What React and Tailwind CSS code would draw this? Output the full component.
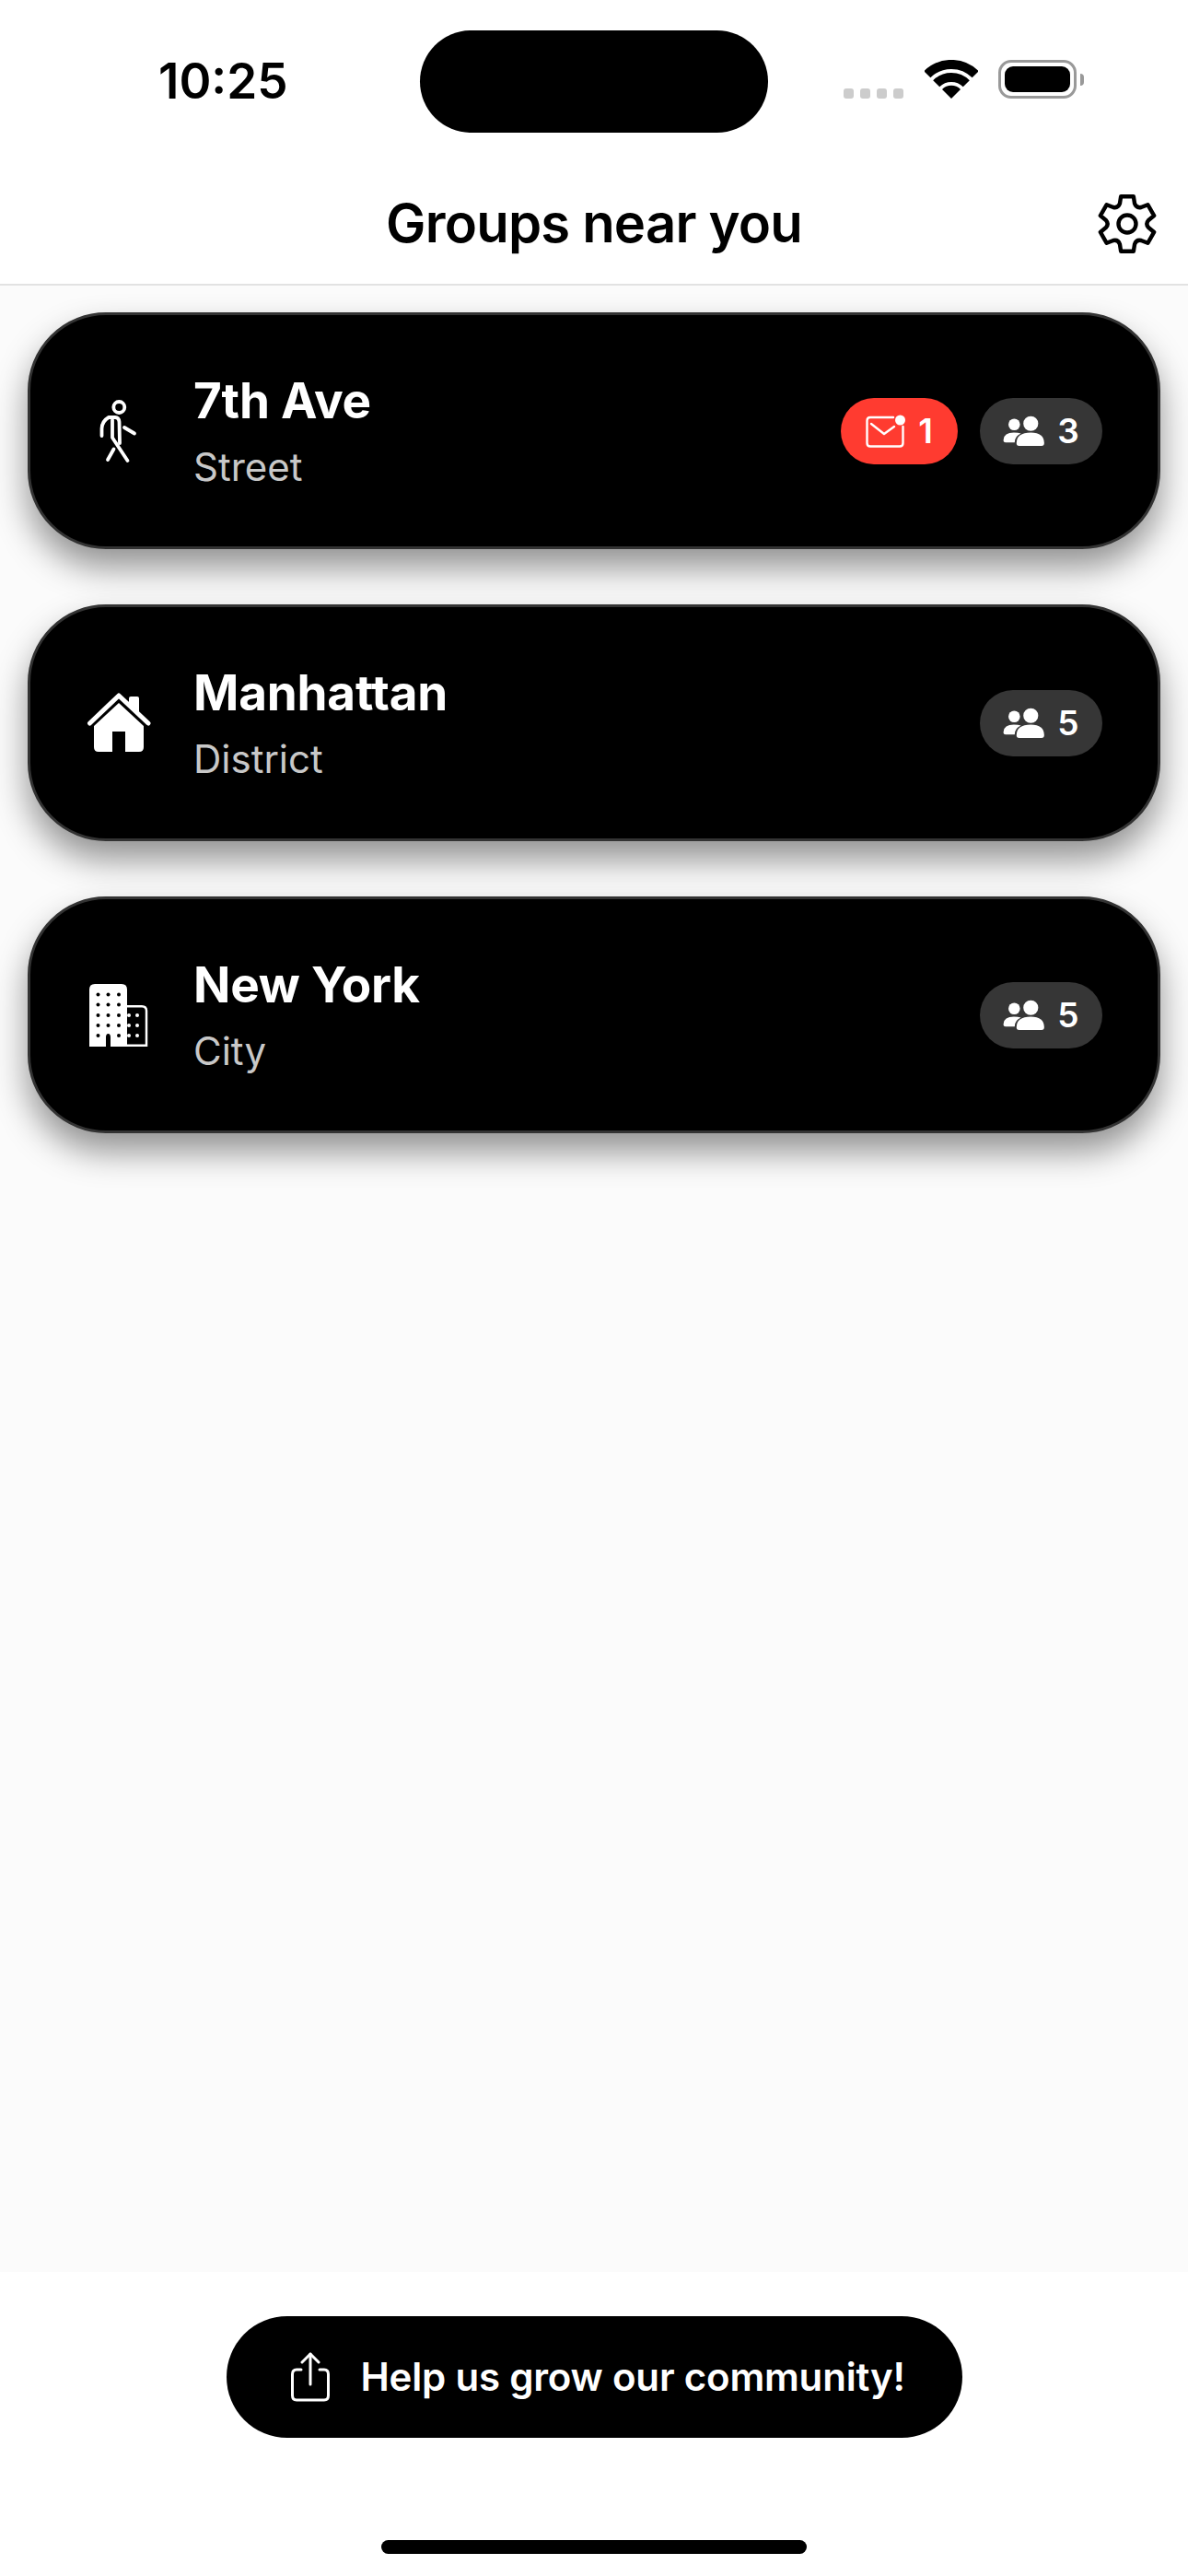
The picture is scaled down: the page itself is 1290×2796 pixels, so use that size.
import React from "react";

const groups = [
  { name: "7th Ave", type: "Street", icon: "walker", members: 3, unread: 1 },
  { name: "Manhattan", type: "District", icon: "house", members: 5 },
  { name: "New York", type: "City", icon: "building", members: 5 },
];

function polar(r, deg) {
  const rad = (deg * Math.PI) / 180;
  return `${(33 + r * Math.cos(rad)).toFixed(2)} ${(33 + r * Math.sin(rad)).toFixed(2)}`;
}

// six flat teeth, one pointing straight up
function gearPath() {
  let d = "";
  for (let k = 0; k < 6; k++) {
    const a = -90 + k * 60;
    d += `${k === 0 ? "M" : "L"}${polar(23.5, a - 20)}L${polar(30.5, a - 13)}L${polar(30.5, a + 13)}L${polar(23.5, a + 20)}Q${polar(19.5, a + 30)} ${polar(23.5, a + 40)}`;
  }
  return d + "Z";
}

function GearIcon() {
  return (
    <svg width="66" height="66" viewBox="0 0 66 66" fill="none" stroke="black" strokeWidth="4.4" strokeLinejoin="round">
      <path d={gearPath()} />
      <circle cx="33" cy="33" r="9.500" />
    </svg>
  );
}

function WalkerIcon() {
  return (
    <svg width="150" height="128" viewBox="0 -7 150 128" fill="none" stroke="white" strokeWidth="3.8" strokeLinecap="round" strokeLinejoin="round">
      <circle cx="69.3" cy="31" r="6" />
      <path d="M50.5 62V54Q51 46 58 42H65Q69 42 69.5 47L70 70" />
      <path d="M62 45V64L78.5 89" />
      <path d="M75 53L86 59.5" />
      <path d="M63.5 76.500L57 88" />
    </svg>
  );
}

function HouseIcon() {
  return (
    <svg width="150" height="128" viewBox="0 0 150 128" fill="white">
      <path d="M37.500 64L69 34L101 64" fill="none" stroke="white" strokeWidth="5" strokeLinecap="round" strokeLinejoin="round" />
      <path d="M80 42V37Q80 35 82 35H89Q91 35 91 37V52Z" />
      <path d="M42 67L69 42L96 67V90Q96 95 91 95H76V73H62V95H47Q42 95 42 90Z" />
    </svg>
  );
}

function BuildingIcon() {
  const towerDots = [38.5, 49.5, 61, 72, 83];
  return (
    <svg width="150" height="128" viewBox="0 -3 150 128">
      <path d="M37 33Q37 27 43 27H72Q78 27 78 33V95H60V85Q60 81 57.500 81Q55 81 55 85V95H37Z" fill="white" />
      <path d="M78 51.200H94Q99 51.200 99 56V93.800H78" fill="none" stroke="white" strokeWidth="2.500" />
      {towerDots.map((y) =>
        [46.5, 57.5, 69].map((x) =>
          y === 83 && x === 57.5 ? null : <circle key={`${x}-${y}`} cx={x} cy={y} r="2" fill="black" />
        )
      )}
      {[61, 72, 83].map((y) =>
        [80, 89].map((x) => <circle key={`${x}-${y}`} cx={x} cy={y} r="2" fill="white" />)
      )}
    </svg>
  );
}

function MailIcon() {
  return (
    <svg width="44" height="40" viewBox="0 0 44 40" fill="none" stroke="white" strokeWidth="2.400" strokeLinejoin="round" strokeLinecap="round">
      <path d="M30 5H5Q1.500 5 1.500 8.500V33Q1.500 36.500 5 36.500H37Q40.500 36.500 40.500 33V15" />
      <path d="M6 12L20 23L31 15" />
      <circle cx="37.500" cy="8" r="5.500" fill="white" stroke="none" />
    </svg>
  );
}

function PeopleIcon() {
  return (
    <svg width="46" height="34" viewBox="209 51 47 35" fill="white">
      <circle cx="240" cy="60" r="8.300" />
      <path d="M224 82Q224 70 240 70Q255 70 255 82Q255 85 252 85H227Q224 85 224 82Z" />
      <circle cx="221.500" cy="61" r="6.500" />
      <path d="M209.500 78Q210 70 221 70Q226 70 229 71Q222 74 222 81H212Q209 81 209.500 78Z" />
    </svg>
  );
}

function ShareIcon() {
  return (
    <svg width="42" height="54" viewBox="0 0 42 54" fill="none" stroke="white" strokeWidth="3" strokeLinecap="round" strokeLinejoin="round">
      <path d="M21 35V2" />
      <path d="M12 11L21 2L30 11" />
      <path d="M11 19H6Q1.500 19 1.500 24V47Q1.500 52 6 52H36Q40.500 52 40.500 47V24Q40.500 19 36 19H31" />
    </svg>
  );
}

function WifiIcon() {
  return (
    <svg width="58" height="42" viewBox="0 0 58 42" fill="none" stroke="black" strokeWidth="10">
      <path d="M2.800 15.800A37 37 0 0 1 55.200 15.800" />
      <path d="M12.700 25.700A23 23 0 0 1 45.300 25.700" />
      <path d="M29 42L19 32A14 14 0 0 1 39 32Z" fill="black" stroke="none" />
    </svg>
  );
}

function StatusBar() {
  return (
    <div className="h-[174px] flex items-start shrink-0">
      <div className="w-[456px] pl-[172px] pt-[57px] text-[53px] leading-[62px] font-semibold text-black">10:25</div>
      <div className="w-[378px] h-[111px] mt-[33px] bg-black rounded-full"></div>
      <div className="flex items-start pl-[82px] pt-[65px]">
        <div className="flex gap-[7px] pt-[31px]">
          <div className="w-[11px] h-[11px] rounded-[3px] bg-[#cccccc]"></div>
          <div className="w-[11px] h-[11px] rounded-[3px] bg-[#cccccc]"></div>
          <div className="w-[11px] h-[11px] rounded-[3px] bg-[#cccccc]"></div>
          <div className="w-[11px] h-[11px] rounded-[3px] bg-[#cccccc]"></div>
        </div>
        <div className="ml-[23px]"><WifiIcon /></div>
        <div className="ml-[22px] w-[85px] h-[42px] rounded-[14px] border-[3px] border-[#999999] p-[4px]">
          <div className="w-full h-full rounded-[9px] bg-black"></div>
        </div>
        <div className="ml-[4px] mt-[15px] w-[4px] h-[13px] rounded-r-full bg-[#999999]"></div>
      </div>
    </div>
  );
}

function Pill({ color, children }) {
  return (
    <div className={`h-[72px] rounded-full flex items-center justify-center text-white text-[37px] font-semibold ${color}`}>
      {children}
    </div>
  );
}

function GroupCard({ group }) {
  return (
    <div className="h-[257px] rounded-[85px] bg-black border-[3px] border-[#333333] shadow-[0_20px_36px_rgba(0,0,0,0.42)] flex items-center pr-[60px] text-white">
      <div className="w-[177px] shrink-0 pl-[27px]">
        {group.icon === "walker" && <WalkerIcon />}
        {group.icon === "house" && <HouseIcon />}
        {group.icon === "building" && <BuildingIcon />}
      </div>
      <div className="flex flex-col flex-1">
        <div className="text-[53px] leading-[64px] font-bold tracking-[-0.2px]">{group.name}</div>
        <div className="text-[42px] leading-[50px] mt-[15px] text-[#c8c8c8] font-normal">{group.type}</div>
      </div>
      <div className="flex gap-[24px]">
        {group.unread ? (
          <Pill color="bg-[#ff3b30] w-[127px] gap-[13px]">
            <MailIcon />
            <span>{group.unread}</span>
          </Pill>
        ) : null}
        <Pill color="bg-[#363636] w-[133px] gap-[13px]">
          <PeopleIcon />
          <span>{group.members}</span>
        </Pill>
      </div>
    </div>
  );
}

export default function App() {
  return (
    <div className="w-[1290px] h-[2796px] flex flex-col bg-white font-['Inter',sans-serif] overflow-hidden">
      <StatusBar />
      <header className="h-[136px] shrink-0 border-b-[2px] border-[#e2e2e2] flex items-center justify-center relative">
        <h1 className="text-[58px] leading-[70px] font-semibold text-black mt-[2px] tracking-[-0.8px]">Groups near you</h1>
        <div className="absolute right-[33px] top-[36px]">
          <GearIcon />
        </div>
      </header>
      <main className="flex-1 bg-[#fbfbfb] px-[30px] pt-[29px] flex flex-col gap-[60px]">
        {groups.map((group) => (
          <GroupCard key={group.name} group={group} />
        ))}
      </main>
      <footer className="h-[330px] shrink-0 bg-white flex flex-col items-center">
        <button className="mt-[48px] w-[799px] h-[132px] rounded-full bg-black text-white flex items-center justify-start pl-[70px] gap-[34px] text-[42px] font-semibold tracking-[-0.2px]">
          <ShareIcon />
          <span className="-mt-[2px]">Help us grow our community!</span>
        </button>
        <div className="mt-[111px] w-[462px] h-[15px] rounded-full bg-black"></div>
      </footer>
    </div>
  );
}
